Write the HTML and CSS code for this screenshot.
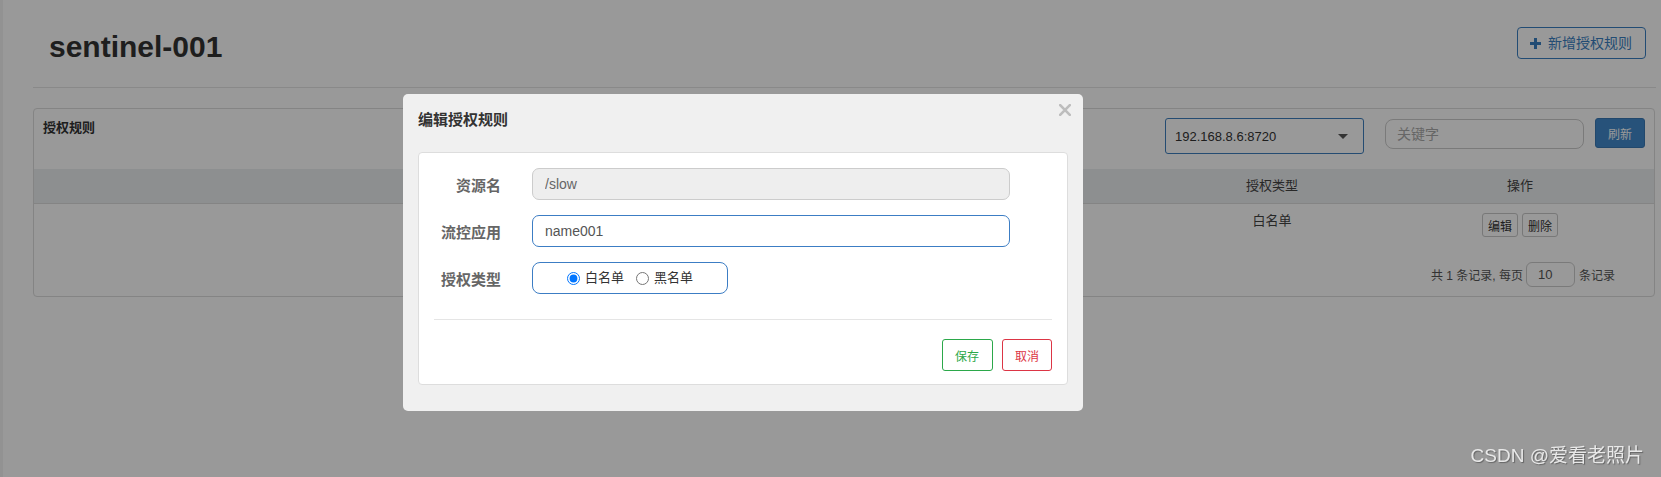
FILE: index.html
```html
<!DOCTYPE html>
<html lang="zh-CN">
<head>
<meta charset="utf-8">
<title>sentinel-001 授权规则</title>
<link rel="stylesheet" href="styles.css">
</head>
<body>
<div class="app">
  <aside class="sidebar"></aside>
  <main class="main">
    <header class="page-header">
      <h1 class="page-title">sentinel-001</h1>
      <button class="btn-add" type="button">
        <svg class="plus" width="11" height="11" viewBox="0 0 11 11" aria-hidden="true"><path d="M4 0h3v11H4z M0 4h11v3H0z" fill="currentColor"/></svg>
        <span>新增授权规则</span>
      </button>
    </header>

    <section class="panel">
      <div class="panel-toolbar">
        <span class="panel-title">授权规则</span>
        <div class="tools">
          <div class="select"><span>192.168.8.6:8720</span><span class="caret"></span></div>
          <input class="search" type="text" placeholder="关键字">
          <button class="btn-refresh" type="button">刷新</button>
        </div>
      </div>
      <div class="table">
        <div class="thead">
          <div class="cell"></div>
          <div class="cell">资源名</div>
          <div class="cell">流控应用</div>
          <div class="cell">授权类型</div>
          <div class="cell">操作</div>
        </div>
        <div class="trow">
          <div class="cell"></div>
          <div class="cell">/slow</div>
          <div class="cell">name001</div>
          <div class="cell">白名单</div>
          <div class="cell ops">
            <button class="btn-xs" type="button">编辑</button>
            <button class="btn-xs" type="button">删除</button>
          </div>
        </div>
      </div>
      <div class="pager">
        <span>共 1 条记录, 每页</span>
        <input class="page-size" type="text" value="10">
        <span>条记录</span>
      </div>
    </section>
  </main>
</div>

<div class="overlay"></div>

<div class="dialog">
  <button class="dialog-close" type="button" aria-label="关闭">
    <svg width="12" height="12" viewBox="0 0 12 12" aria-hidden="true"><path d="M1.2 1.2L10.8 10.8M10.8 1.2L1.2 10.8" stroke="currentColor" stroke-width="2.6" stroke-linecap="square"/></svg>
  </button>
  <div class="dialog-title">编辑授权规则</div>
  <div class="dialog-card">
    <div class="form-row">
      <label class="form-label">资源名</label>
      <input class="form-input is-disabled" type="text" value="/slow" disabled>
    </div>
    <div class="form-row">
      <label class="form-label">流控应用</label>
      <input class="form-input is-active" type="text" value="name001">
    </div>
    <div class="form-row">
      <label class="form-label">授权类型</label>
      <div class="radio-group">
        <label class="radio"><input type="radio" name="strategy" checked><span>白名单</span></label>
        <label class="radio"><input type="radio" name="strategy"><span>黑名单</span></label>
      </div>
    </div>
    <div class="divider"></div>
    <div class="dialog-footer">
      <button class="btn-save" type="button">保存</button>
      <button class="btn-cancel" type="button">取消</button>
    </div>
  </div>
</div>

<div class="watermark">CSDN @爱看老照片</div>
</body>
</html>
```

FILE: styles.css
```css
* { box-sizing: border-box; }

html, body {
  margin: 0;
  height: 100%;
}

body {
  font-family: "Liberation Sans", "Noto Sans CJK SC", sans-serif;
  font-size: 13px;
  color: #333;
  background: #fff;
  overflow: hidden;
}

button, input {
  font-family: inherit;
}

.app {
  display: flex;
  min-height: 100%;
}

.sidebar {
  flex: none;
  width: 3px;
  background: #f4f4f4;
}

.main {
  flex: 1;
  margin-left: 30px;
  margin-right: 5px;
}

/* header */
.page-header {
  display: flex;
  justify-content: space-between;
  align-items: flex-start;
  height: 88px;
  padding: 0 10px 0 16px;
  border-bottom: 1px solid #e4e4e4;
}

.page-title {
  margin: 30px 0 0;
  font-size: 30px;
  line-height: 33px;
  font-weight: bold;
  color: #333;
}

.btn-add {
  margin-top: 27px;
  height: 32px;
  display: flex;
  align-items: center;
  gap: 7px;
  padding: 0 13px 0 12px;
  background: #fff;
  border: 1px solid #3a7fc2;
  border-radius: 4px;
  color: #3a7fc2;
  font-size: 14px;
  line-height: 20px;
}

.btn-add .plus { display: block; }

/* panel */
.panel {
  margin: 20px 1px 0 0;
  border: 1px solid #dcdcdc;
  border-radius: 4px;
  padding-bottom: 9px;
}

.panel-toolbar {
  display: flex;
  justify-content: space-between;
  align-items: flex-start;
  padding: 9px 9px 0 9px;
}

.panel-title {
  font-size: 13px;
  line-height: 20px;
  font-weight: bold;
  color: #333;
}

.tools {
  display: flex;
  align-items: flex-start;
}

.select {
  width: 199px;
  height: 36px;
  display: flex;
  align-items: center;
  justify-content: space-between;
  padding: 0 15px 0 9px;
  border: 1px solid #3f7fbe;
  border-radius: 3px;
  font-size: 13px;
  color: #333;
}

.caret {
  width: 0;
  height: 0;
  border-left: 5px solid transparent;
  border-right: 5px solid transparent;
  border-top: 5px solid #555;
}

.search {
  margin: 1px 0 0 21px;
  width: 199px;
  height: 30px;
  padding: 0 11px;
  border: 1px solid #ccc;
  border-radius: 8px;
  font-size: 14px;
  color: #555;
  outline: none;
}

.search::placeholder { color: #aaa; }

.btn-refresh {
  margin-left: 11px;
  width: 50px;
  height: 30px;
  padding: 0;
  border: 1px solid #3a78b5;
  border-radius: 3px;
  background: #4189cb;
  color: #fff;
  font-size: 12px;
}

/* table */
.table { margin-top: 15px; }

.thead, .trow {
  display: grid;
  grid-template-columns: 566fr 300fr 258fr 228fr 268fr;
}

.thead {
  height: 35px;
  background: #eceef0;
  border-bottom: 1px solid #dcdcdc;
}

.thead .cell {
  font-size: 13px;
  line-height: 34px;
  text-align: center;
  color: #444;
}

.trow .cell {
  padding: 8px 8px;
  font-size: 13px;
  line-height: 18px;
  text-align: center;
  color: #444;
}

.trow .ops {
  display: flex;
  justify-content: center;
  gap: 4px;
  padding-top: 9px;
}

.btn-xs {
  height: 24px;
  padding: 0 5px;
  background: #fff;
  border: 1px solid #c8c8c8;
  border-radius: 3px;
  font-size: 12px;
  color: #333;
}

.pager {
  display: flex;
  justify-content: flex-end;
  align-items: center;
  gap: 3px;
  margin-top: 17px;
  padding-right: 39px;
  font-size: 12px;
  color: #555;
}

.page-size {
  width: 49px;
  height: 25px;
  margin: 0 1px 0 0;
  padding: 0 11px;
  border: 1px solid #ccc;
  border-radius: 6px;
  font-size: 13px;
  color: #555;
}

/* overlay + dialog */
.overlay {
  position: fixed;
  inset: 0;
  background: rgba(0, 0, 0, 0.4);
  z-index: 10;
}

.dialog {
  position: absolute;
  left: 403px;
  top: 94px;
  width: 680px;
  padding: 16px 15px 26px;
  background: #f0f0f0;
  border-radius: 5px;
  z-index: 20;
}

.dialog-close {
  position: absolute;
  top: 10px;
  right: 12px;
  width: 12px;
  height: 12px;
  padding: 0;
  border: 0;
  background: none;
  color: #bdbdbd;
}

.dialog-close svg { display: block; }

.dialog-title {
  font-size: 15px;
  line-height: 20px;
  font-weight: bold;
  color: #333;
  margin-bottom: 22px;
}

.dialog-card {
  background: #fff;
  border: 1px solid #ddd;
  border-radius: 4px;
  padding: 15px 15px 13px;
}

.form-row {
  display: grid;
  grid-template-columns: 67px 478px;
  column-gap: 31px;
  align-items: center;
  margin-bottom: 15px;
}

.form-row:nth-last-of-type(1) { margin-bottom: 0; }

.form-label {
  text-align: right;
  font-size: 15px;
  line-height: 20px;
  font-weight: bold;
  color: #666;
  padding-top: 3px;
}

.form-input {
  height: 32px;
  padding: 0 12px;
  border-radius: 7px;
  font-size: 14px;
  outline: none;
}

.form-input.is-disabled {
  background: #eee;
  border: 1px solid #ccc;
  color: #666;
}

.form-input.is-active {
  background: #fff;
  border: 1px solid #3c7dc4;
  color: #555;
}

.radio-group {
  width: 196px;
  height: 32px;
  display: flex;
  justify-content: center;
  align-items: center;
  gap: 12px;
  border: 1px solid #3c7dc4;
  border-radius: 8px;
}

.radio {
  display: inline-flex;
  align-items: center;
  gap: 5px;
  font-size: 13px;
  line-height: 18px;
  color: #333;
}

.radio input {
  margin: 0;
  width: 13px;
  height: 13px;
}

.divider {
  margin: 25px 0 19px;
  border-top: 1px solid #e5e5e5;
}

.dialog-footer {
  display: flex;
  justify-content: flex-end;
  gap: 9px;
}

.btn-save, .btn-cancel {
  height: 32px;
  padding: 0 12px;
  background: #fff;
  border-radius: 3px;
  font-size: 12px;
}

.btn-save {
  border: 1px solid #2ba84a;
  color: #2ba84a;
  padding: 0 13px 0 12px;
}

.btn-cancel {
  border: 1px solid #dc3545;
  color: #dc3545;
}

.watermark {
  position: absolute;
  right: 17px;
  bottom: 10px;
  font-size: 19px;
  line-height: 22px;
  color: #e8e8e8;
  text-shadow: 1px 1px 1px rgba(0, 0, 0, 0.35);
  z-index: 30;
}
```
